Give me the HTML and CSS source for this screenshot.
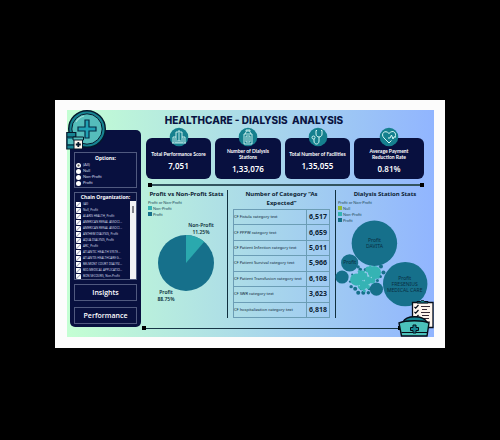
FILE: index.html
```html
<!DOCTYPE html>
<html lang="en">
<head>
<meta charset="utf-8">
<title>Healthcare - Dialysis Analysis</title>
<link rel="stylesheet" href="styles.css">
</head>
<body>
<div class="sheet">
<div class="board">
  <h1 class="title">HEALTHCARE - DIALYSIS&nbsp; ANALYSIS</h1>
  <aside class="sidebar">
    <svg class="logo" viewBox="0 0 42 41" aria-hidden="true">
      <circle cx="21" cy="19" r="18.3" fill="#168391" stroke="#04182b" stroke-width="1.4"/>
      <circle cx="21" cy="19" r="15.2" fill="#55bdbb" stroke="#04182b"/>
      <path d="M10 12a13 13 0 0 1 8-6" fill="none" stroke="#a3e2da" stroke-width="1.2"/>
      <path d="M19 10h4v7h7v4h-7v7h-4v-7h-7v-4h7z" fill="#20a1b4" stroke="#062c45" stroke-width="1.2"/>
      <path d="M.8 22.500h9v16.500h-9z" fill="#168391" stroke="#04182b" stroke-width="1.200"/>
      <path d="M1 27h9M1 35h9" stroke="#04182b"/>
      <path d="M2 29h6v5h-6z" fill="#55bdbb"/>
      <path d="M8 29h8.500v10h-8.500z" fill="#fff6ec" stroke="#04182b"/>
      <path d="M7 27h10.500v3h-10.500z" fill="#55bdbb" stroke="#04182b"/>
      <path d="M12.300 32v5M9.800 34.500h5" stroke="#04182b" stroke-width="1.800"/>
    </svg>
    <fieldset class="box">
      <legend class="box-title">Options:</legend>
      <label class="choice"><input type="radio" name="type" checked>(All)</label>
      <label class="choice"><input type="radio" name="type">Null</label>
      <label class="choice"><input type="radio" name="type">Non-Profit</label>
      <label class="choice"><input type="radio" name="type">Profit</label>
    </fieldset>
    <fieldset class="box chain">
      <legend class="box-title">Chain Organization:</legend>
      <div class="scroller">
        <div class="list">
          <label class="choice"><input type="checkbox" checked>(All)</label>
          <label class="choice"><input type="checkbox" checked>Null, Profit</label>
          <label class="choice"><input type="checkbox" checked>ALARIS HEALTH, Profit</label>
          <label class="choice"><input type="checkbox" checked>AMERICAN RENAL ASSOCI...</label>
          <label class="choice"><input type="checkbox" checked>AMERICAN RENAL ASSOCI...</label>
          <label class="choice"><input type="checkbox" checked>ANTHEM DIALYSIS, Profit</label>
          <label class="choice"><input type="checkbox" checked>AQUA DIALYSIS, Profit</label>
          <label class="choice"><input type="checkbox" checked>ARC, Profit</label>
          <label class="choice"><input type="checkbox" checked>ATLANTIC HEALTH SYSTE...</label>
          <label class="choice"><input type="checkbox" checked>ATLANTIS HEALTHCARE G...</label>
          <label class="choice"><input type="checkbox" checked>BELMONT COURT DIALYSI...</label>
          <label class="choice"><input type="checkbox" checked>BIO-MEDICAL APPLICATIO...</label>
          <label class="choice"><input type="checkbox" checked>BON SECOURS, Non-Profit</label>
        </div>
        <div class="track"><div class="thumb"></div></div>
      </div>
    </fieldset>
    <button class="nav" type="button">Insights</button>
    <button class="nav" type="button">Performance</button>
  </aside>
  <main class="main">
    <section class="cards">
      <div class="card">
        <svg class="badge" viewBox="0 0 20 20" aria-hidden="true"><circle cx="10" cy="10" r="9.300" fill="#15808e"/><path d="M7 16V5h6v11M4 16v-6h3M13 10h3v6M3 16h14M9 16v-3h2v3M10 5V3M9 7h2M9 9h2M9 11h2M5 12h1M14 12h1M5 14h1M14 14h1" fill="none" stroke="#d5f6f3" stroke-width=".9"/></svg>
        <h2 class="card-name">Total Performance Score</h2>
        <p class="card-value">7,051</p>
      </div>
      <div class="card">
        <svg class="badge" viewBox="0 0 20 20" aria-hidden="true"><circle cx="10" cy="10" r="9.300" fill="#15808e"/><path d="M8 4V3h4v1M7 7l1.500-3h3L13 7M6 7h8v10H6zM8 9h4v6H8zM9 11h2M9 13h2" fill="none" stroke="#d5f6f3" stroke-width=".9"/></svg>
        <h2 class="card-name">Number of Dialysis Stations</h2>
        <p class="card-value">1,33,076</p>
      </div>
      <div class="card">
        <svg class="badge" viewBox="0 0 20 20" aria-hidden="true"><circle cx="10" cy="10" r="9.300" fill="#15808e"/><path d="M9 3.500H8V7c0 4 6 4 6 0V3.500h-1M11 10v4c0 4-5 4-5 0v-2" fill="none" stroke="#d5f6f3"/><circle cx="5.500" cy="10.500" r="1.500" fill="none" stroke="#d5f6f3"/></svg>
        <h2 class="card-name">Total Number of Facilities</h2>
        <p class="card-value">1,35,055</p>
      </div>
      <div class="card">
        <svg class="badge" viewBox="0 0 20 20" aria-hidden="true"><circle cx="10" cy="10" r="9.300" fill="#15808e"/><path d="M12.500 13.500L10 16 5 11C1 7 6 2 10 6.500 14 2 18 6 16 10M9 11h2l1.500-3 1.500 4 1-2h2" fill="none" stroke="#d5f6f3"/></svg>
        <h2 class="card-name">Average Payment Reduction Rate</h2>
        <p class="card-value">0.81%</p>
      </div>
    </section>
    <div class="rule"></div>
    <section class="panels">
      <div class="panel">
        <h2 class="panel-title">Profit vs Non-Profit Stats</h2>
        <div class="legend">
          <p>Profit or Non-Profit</p>
          <ul><li class="key non-profit">Non-Profit</li><li class="key profit">Profit</li></ul>
        </div>
        <svg class="chart" viewBox="0 0 81 90" role="img" aria-label="Profit share">
          <circle cx="40" cy="46" r="28" fill="#16708b"/>
          <path d="M40 46V18A28 28 0 0 1 58.200 24.700Z" fill="#2aa9ae"/>
          <g class="pie-label"><text x="55" y="10">Non-Profit</text><text x="55" y="17">11.25%</text><text x="20" y="77">Profit</text><text x="20" y="84">88.75%</text></g>
        </svg>
      </div>
      <div class="panel">
        <h2 class="panel-title large">Number of Category “As Expected”</h2>
        <table class="scores">
          <tr><th scope="row">CF Fistula category text</th><td>6,517</td></tr>
          <tr><th scope="row">CF PPPW category text</th><td>6,659</td></tr>
          <tr><th scope="row">CF Patient Infection category text</th><td>5,011</td></tr>
          <tr><th scope="row">CF Patient Survival category text</th><td>5,966</td></tr>
          <tr><th scope="row">CF Patient Transfusion category text</th><td>6,108</td></tr>
          <tr><th scope="row">CF SWR category text</th><td>3,623</td></tr>
          <tr><th scope="row">CF hospitalization category text</th><td>6,818</td></tr>
        </table>
      </div>
      <div class="panel">
        <h2 class="panel-title">Dialysis Station Stats</h2>
        <div class="legend">
          <p>Profit or Non-Profit</p>
          <ul><li class="key null">Null</li><li class="key non-profit">Non-Profit</li><li class="key profit">Profit</li></ul>
        </div>
        <svg class="chart bubbles" viewBox="0 0 97 88" role="img" aria-label="Stations by organization">
          <g fill="#16708b">
            <circle cx="38" cy="20" r="22.500"/><circle cx="68.500" cy="60.500" r="22"/><circle cx="13.500" cy="39.500" r="8.500"/><circle cx="6" cy="53.500" r="6.500"/><circle cx="40" cy="65.500" r="6.500"/>
            <circle cx="22" cy="43.500" r="1.600"/><circle cx="24" cy="46" r="1.800"/><circle cx="44.500" cy="43" r="2"/><circle cx="47" cy="49" r="2"/><circle cx="44" cy="53" r="1.500"/><circle cx="15" cy="63" r="1.700"/><circle cx="14" cy="58" r="1.200"/><circle cx="19" cy="65" r="2"/><circle cx="22" cy="69" r="2"/><circle cx="27" cy="69" r="2"/><circle cx="32" cy="69" r="1.700"/><circle cx="25" cy="65" r="1.500"/><circle cx="33" cy="65" r="1.500"/><circle cx="29" cy="46" r="1.500"/><circle cx="16" cy="51" r="1"/><circle cx="41" cy="57" r="1.500"/>
          </g>
          <g fill="#35b3b4">
            <circle cx="20" cy="56" r="6"/><circle cx="26" cy="52" r="5"/><circle cx="38" cy="49" r="6.500"/><circle cx="32" cy="46" r="3"/><circle cx="26" cy="62" r="4.500"/><circle cx="31" cy="57" r="4"/><circle cx="36" cy="57" r="3"/><circle cx="31" cy="63" r="2.500"/><circle cx="23" cy="48" r="1.500"/><circle cx="28" cy="67" r="1.500"/><circle cx="42" cy="54" r="1.200"/><circle cx="34" cy="43" r="1.200"/>
          </g>
          <g fill="#8ed4dc"><circle cx="29" cy="49" r=".8"/><circle cx="32" cy="52" r=".9"/><circle cx="28" cy="57" r=".8"/><circle cx="33" cy="61" r=".8"/><circle cx="23" cy="62" r=".7"/><circle cx="35" cy="54" r=".7"/><circle cx="30" cy="65" r=".7"/></g>
          <g class="bubble-label"><text x="38" y="19">Profit</text><text x="38" y="25">DAVITA</text><text x="13.500" y="41">Profit</text><text x="68" y="56">Profit</text><text x="68" y="62">FRESENIUS</text><text x="68" y="68">MEDICAL CARE</text></g>
        </svg>
      </div>
    </section>
    <div class="rule bottom"></div>
  </main>
  <svg class="nurse" viewBox="0 0 36 37" aria-hidden="true">
    <path d="M14.500 2.500h20.500v25H14.500z" fill="#fff6ee" stroke="#050d18" stroke-width="1.300"/>
    <path d="M19 3V1.500h3.500c1-1.500 3-1.500 4 0H30V3z" fill="#168391" stroke="#050d18"/>
    <path d="M16.500 7l1.200 1.200L20.500 5M16.500 12l1.200 1.200L20.500 10M16.500 17l1.200 1.200L20.500 15" fill="none" stroke="#050d18" stroke-width="1.200"/>
    <path d="M23 6.500h9M24 9.500h5M23 12.500h9M24 15.500h7M25 18.500h6M28 22h4" stroke="#372b35" stroke-width="1.100"/>
    <path d="M5 22C8 15 25 15 29 22z" fill="#168391" stroke="#050d18" stroke-width="1.300"/>
    <path d="M1 23C8 20 25 20 31 23l-2 13H3.500z" fill="#4bc1bb" stroke="#050d18" stroke-width="1.400"/>
    <path d="M3.500 32.500h26" stroke="#050d18"/>
    <path d="M15 25h3v2.500h2.500v3H18V33h-3v-2.500h-2.500v-3H15z" fill="#168391" stroke="#050d18"/>
  </svg>
</div>
</div>
</body>
</html>
```
FILE: styles.css
```css
* { box-sizing: border-box; }

body {
  margin: 0;
  padding: 100px 11% 92px;
  background: #000;
  color: #0c2233;
  font-family: "Noto Sans", "Open Sans", sans-serif;
}

h1, h2, p, ul, fieldset, legend { margin: 0; padding: 0; }
ul { list-style: none; }
svg { display: block; }

.sheet { padding: 10px 11px 11px 12px; background: #fcfcfc; }

.board {
  position: relative;
  display: grid;
  grid-template-columns: 71px 1fr;
  column-gap: 5px;
  padding: 0 0 10px 3px;
  background: linear-gradient(90deg, #c4ffd3, #91b5ff);
}

.title {
  grid-column: 1 / -1;
  padding-left: 4px;
  color: #0a1442;
  font: 800 10px/20px Inter, sans-serif;
  text-align: center;
}

.sidebar {
  position: relative;
  display: flex;
  flex-direction: column;
  gap: 4px;
  padding: 22px 4px 3px;
  border-radius: 5px;
  background: #08103f;
  color: #fff;
}

.logo { position: absolute; top: -20px; left: -4px; width: 42px; }

.box { min-width: 0; border: 1px solid #50597f; padding: 1px; }
.box-title { float: left; width: 100%; font-size: 5px; line-height: 8px; font-weight: 700; text-align: center; }

.choice {
  display: flex;
  clear: both;
  align-items: center;
  gap: 2px;
  height: 6px;
  color: #d3d8e8;
  font: 4px/6px Lato, sans-serif;
  white-space: nowrap;
}
.choice input {
  flex: none;
  appearance: none;
  width: 5px;
  height: 5px;
  margin: 0;
  background: #fff;
}
.choice input[type="radio"] { border-radius: 50%; }
.choice input[type="radio"]:checked { background: radial-gradient(#555 15%, #fff 45%); }
.choice input[type="checkbox"] { background: linear-gradient(135deg, #fff 35%, #a9aec2 50%, #fff 65%); }

.chain { padding: 0; }
.chain .choice { padding-left: 1px; font: 3px/6px "Noto Sans", sans-serif; }
.scroller { display: flex; clear: both; }
.list { flex: 1; min-width: 0; }
.track { width: 6px; padding: 5px 2px; background: #f3f3f5; }
.thumb { height: 7px; background: #85858c; }

.nav {
  height: 17px;
  margin: 0;
  padding: 0;
  border: 1px solid #50597f;
  background: none;
  color: #fff;
  font: 600 7px/14px "Open Sans", sans-serif;
}
.nav + .nav { margin-top: auto; }

.main { display: flex; flex-direction: column; min-width: 0; padding-top: 8px; }

.cards {
  display: grid;
  grid-template-columns: 65fr 66fr 65fr 70fr;
  gap: 4px;
  margin-right: 10px;
}
.card {
  position: relative;
  display: flex;
  flex-direction: column;
  justify-content: center;
  gap: 4px;
  height: 41px;
  padding-top: 5px;
  border-radius: 6px;
  background: #08103f;
  color: #fff;
  text-align: center;
}
.badge { position: absolute; top: -11px; left: calc(50% - 10px); width: 20px; }
.card-name { font: 700 5px/6px Lato, sans-serif; }
.card:nth-child(even) .card-name { padding: 0 10px; }
.card-value { font-size: 8px; line-height: 10px; font-weight: 600; }

.rule {
  display: flex;
  align-items: center;
  justify-content: space-between;
  height: 4px;
  margin: 4px 10px 3px 2px;
  background: linear-gradient(#0000 1px, #33545f 1px, #33545f 3px, #0000 3px);
}
.rule::before, .rule::after { content: ""; width: 4px; height: 4px; background: #000; }
.rule.bottom { margin: 8px 32px -3px -4px; background: linear-gradient(#0000 2px, #173746 2px, #173746 3px, #0000 3px); }

.panels { display: grid; grid-template-columns: 81fr 108fr 99fr; height: 128px; }
.panel { min-width: 0; }
.panel + .panel { border-left: 1px solid #10303f; }
.panel-title { font-size: 6px; line-height: 9px; text-align: center; white-space: nowrap; }
.panel-title.large { padding: 0 12px; white-space: normal; }

.legend { padding: 1px 2px 0; color: #26505f; font: 4px/5px Lato, sans-serif; }
.key { display: flex; align-items: center; gap: 1px; height: 6px; }
.key::before { content: ""; width: 4px; height: 4px; background: var(--swatch); }
.null { --swatch: #94bb36; }
.non-profit { --swatch: #35b3b4; }
.profit { --swatch: #16708b; }

.chart { width: 100%; overflow: visible; }
.pie-label, .bubble-label { text-anchor: middle; }
.pie-label { fill: #0c2f3b; font-size: 5px; font-weight: 600; }
.bubble-label { fill: #082e42; font-size: 5px; }

.scores {
  width: calc(100% - 10px);
  height: 109px;
  margin: 1px 5px 0;
  border-collapse: collapse;
}
.scores th, .scores td { padding: 0; border: 1px solid #6b9db5; }
.scores th { font-size: 4px; line-height: 6px; font-weight: 400; text-align: left; white-space: nowrap; }
.scores td { width: 23px; font-size: 7px; line-height: 8px; font-weight: 700; text-align: center; }

.nurse { position: absolute; right: 0; bottom: 0; width: 36px; }
```
